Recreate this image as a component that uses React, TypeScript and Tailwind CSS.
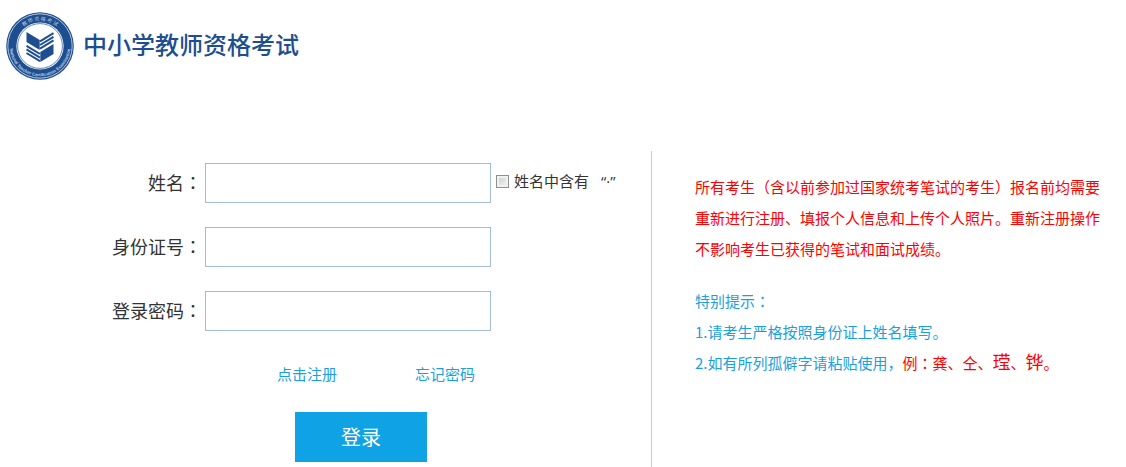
import type { ReactNode } from "react";

const LINK = "text-[15px] text-[#1a9fe0] hover:underline";

function Emblem() {
  return (
    <svg viewBox="0 0 68 68" className="size-[68px] shrink-0" role="img" aria-label="National Teacher Certification Examination">
      <defs>
        <path id="arc-top" d="M8.5 34a25.5 25.5 0 0 1 51 0" />
        <path id="arc-bottom" d="M4.4 27a30.4 30.4 0 1 0 59.2 0" />
      </defs>
      <circle cx="34" cy="34" r="33.8" fill="#1d4e8f" />
      <circle cx="34" cy="34" r="32.2" fill="none" stroke="#c3d2e6" strokeWidth="0.9" />
      <circle cx="34" cy="34" r="23.6" fill="#fff" />
      <circle cx="34" cy="34" r="22.4" fill="none" stroke="#1d4e8f" strokeWidth="0.7" />
      <text fill="#b9cce4" fontSize="5" fontFamily="Noto Sans CJK SC, sans-serif">
        <textPath href="#arc-top" startOffset="50%" textAnchor="middle">教 师 资 格 考 试</textPath>
      </text>
      <text fill="#b9cce4" fontSize="4.4" fontFamily="Liberation Sans, sans-serif" fontWeight="700">
        <textPath href="#arc-bottom" startOffset="50%" textAnchor="middle">National Teacher Certification Examination</textPath>
      </text>
      <g fill="#1d4e8f">
        <path d="M20.5 20 33.7 28v10l-13.2-8z" />
        <path d="M47.5 32 34.3 40v10l13.2-8z" />
      </g>
      <g fill="none" stroke="#1d4e8f" strokeWidth="2">
        <path d="M47.5 21.2 34 29.4M47.5 24.8 34 33M47.5 28.4 34 36.6" />
        <path d="M20.5 33.8 34 42M20.5 37.4 34 45.6M20.5 41 34 49.2" />
      </g>
    </svg>
  );
}

// the Traditional Chinese face centres the colon in its cell
function Mid({ children }: { children: ReactNode }) {
  return <span className="font-['Noto_Sans_CJK_TC',sans-serif]">{children}</span>;
}

function Field({ id, label, type = "text", children }: { id: string; label: string; type?: string; children?: ReactNode }) {
  return (
    <div className="flex items-center">
      <label htmlFor={id} className="w-[205px] shrink-0 pr-[3px] pb-[3px] text-right text-lg">
        {label}
        <Mid>：</Mid>
      </label>
      <input id={id} type={type} className="h-10 w-[286px] border border-[#a3bbd3] bg-white px-2 text-base outline-none focus:border-[#0fa2e4]" />
      {children}
    </div>
  );
}

export default function App() {
  return (
    <div className="bg-white font-['Noto_Sans_CJK_SC',sans-serif] text-[#333]">
      <header className="flex items-center gap-[9px] px-[6px] pt-3">
        <Emblem />
        <h1 className="pb-1 text-2xl font-medium text-[#1d4e8f]">中小学教师资格考试</h1>
      </header>

      <main className="mt-[71px] flex">
        <form className="w-[651px] shrink-0 pt-3" onSubmit={(e) => e.preventDefault()}>
          <div className="flex flex-col gap-6">
            <Field id="name" label="姓名">
              <label className="ml-[5px] flex items-center gap-[5px] pb-[3px] text-[15px]">
                <input
                  type="checkbox"
                  className="size-[13px] appearance-none border border-[#8e8f8f] bg-linear-to-br from-[#c6cad2] to-[#f6f6f6] shadow-[inset_0_0_0_2px_#f1f1f1] checked:bg-[#0fa2e4]"
                />
                <span>
                  姓名中含有<span className="ml-3 font-['Open_Sans',sans-serif]">“·”</span>
                </span>
              </label>
            </Field>
            <Field id="idcard" label="身份证号" />
            <Field id="password" label="登录密码" type="password" />
          </div>
          <div className="mt-8 flex gap-[78px] pl-[277px]">
            <a href="#register" className={LINK}>点击注册</a>
            <a href="#forgot" className={LINK}>忘记密码</a>
          </div>
          <button type="submit" className="mt-[26px] ml-[295px] h-[50px] w-[132px] bg-[#0fa2e4] text-xl text-white hover:bg-[#0b93d0]">
            登录
          </button>
        </form>

        <aside className="min-w-0 flex-1 border-l border-[#ccc] pt-5 pr-4 pb-[90px] pl-[43px] text-[15px] leading-[31px]">
          <p className="text-[#f00]">
            所有考生（含以前参加过国家统考笔试的考生）报名前均需要重新进行注册、填报个人信息和上传个人照片。重新注册操作不影响考生已获得的笔试和面试成绩。
          </p>
          <div className="mt-[21px] text-[#1a9fe0]">
            <p>特别提示<Mid>：</Mid></p>
            <p>1.请考生严格按照身份证上姓名填写。</p>
            <p>
              2.如有所列孤僻字请粘贴使用，
              <span className="text-[#f00]">
                例<Mid>：</Mid>龚、仝、<span className="text-lg leading-none">𬎆</span>、<span className="text-lg leading-none">铧</span>。
              </span>
            </p>
          </div>
        </aside>
      </main>
    </div>
  );
}
